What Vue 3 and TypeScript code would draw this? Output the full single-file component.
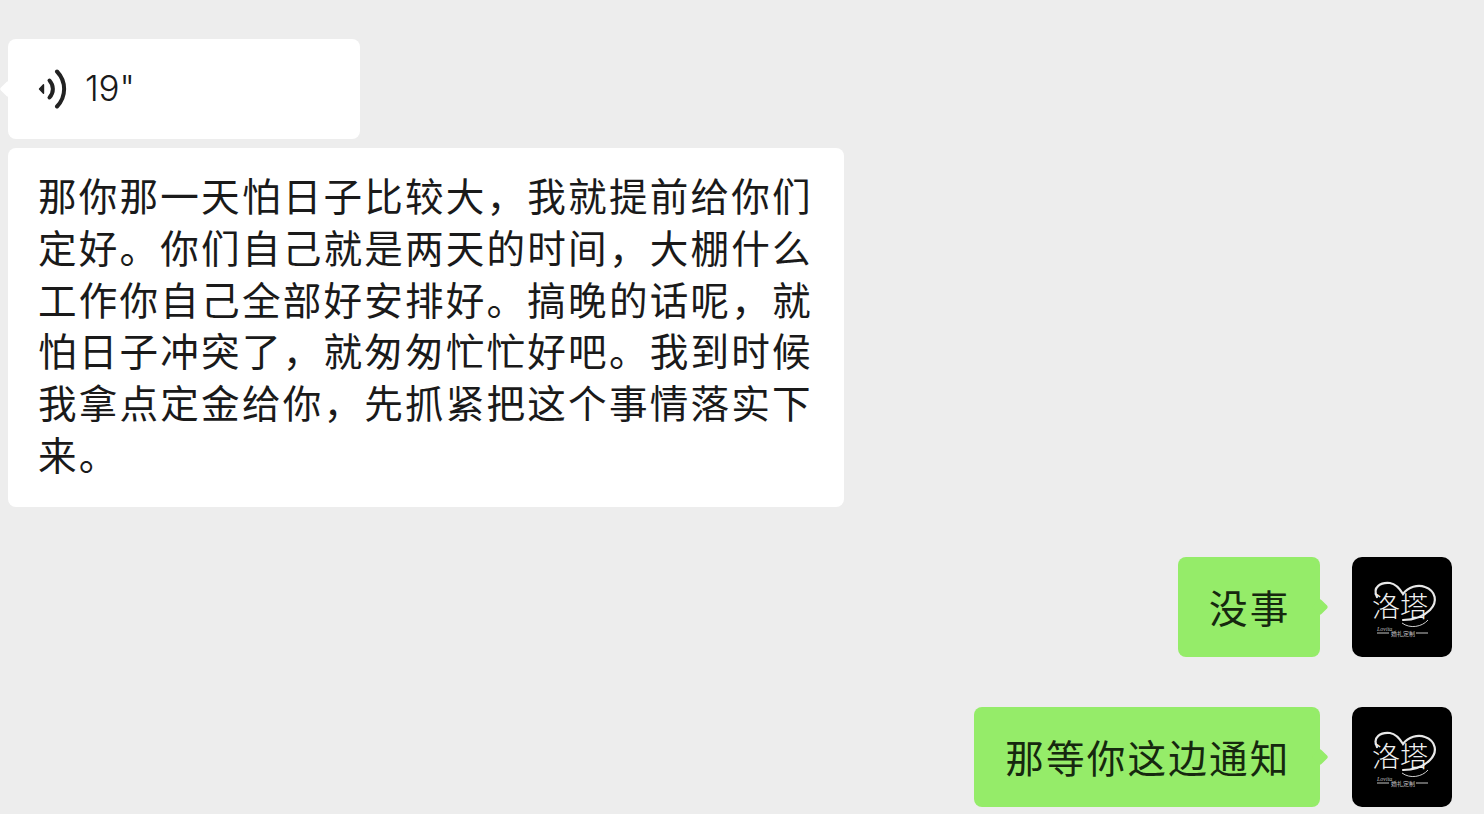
<script setup lang="ts">
/**
 * ChatView — WeChat-style conversation: voice note, transcript, two outgoing replies.
 */
interface Reply {
  id: number
  text: string
}

const transcript =
  "那你那一天怕日子比较大，我就提前给你们定好。你们自己就是两天的时间，大棚什么工作你自己全部好安排好。搞晚的话呢，就怕日子冲突了，就匆匆忙忙好吧。我到时候我拿点定金给你，先抓紧把这个事情落实下来。";

const replies: Reply[] = [
  { id: 1, text: "没事" },
  { id: 2, text: "那等你这边通知" },
];
</script>

<template>
  <div class="chat">
    <div class="incoming">
      <div class="bubble voice">
        <svg class="voice-icon" width="30" height="40" viewBox="0 0 30 40" fill="none">
          <path d="M1.5 20 L5.5 15.8 L5.5 24.2 Z" fill="#222" stroke="#222" stroke-width="1.4" stroke-linejoin="round" />
          <path d="M11.5 11.5 C16 16.5 16 23.5 11.5 28.5" stroke="#222" stroke-width="4" stroke-linecap="round" />
          <path d="M19 2.5 C28.5 12.5 28.5 27.5 19 37.5" stroke="#222" stroke-width="4" stroke-linecap="round" />
        </svg>
        <span class="duration">19"</span>
      </div>
      <div class="bubble transcript">{{ transcript }}</div>
    </div>

    <div class="outgoing">
      <div v-for="reply in replies" :key="reply.id" class="row">
        <div class="bubble green">{{ reply.text }}</div>
        <div class="avatar">
          <svg width="100" height="100" viewBox="0 0 100 100" fill="none">
            <path
              d="M25 40 C20 30 29 25 38 26 C44 27 48 32 51 37 C56 30 66 27 73 30 C84 34 86 45 78 53 C72 59 62 63 51 63"
              stroke="#e8e8e8"
              stroke-width="2.2"
              stroke-linecap="round"
            />
            <path d="M50 66 C58 72 70 70 76 63" stroke="#cfcfcf" stroke-width="1" />
            <text x="20" y="60" class="logo-mark">洛塔</text>
            <text x="25" y="74" class="logo-script">Lovita</text>
            <path d="M25 76 H37 M64 76 H76" stroke="#c4c4c4" stroke-width="1" />
            <text x="51" y="79" class="logo-sub" text-anchor="middle">婚礼定制</text>
          </svg>
        </div>
      </div>
    </div>
  </div>
</template>

<style scoped>
.chat {
  width: 1484px;
  height: 814px;
  box-sizing: border-box;
  padding: 39px 32px 0 8px;
  overflow: hidden;
  display: flex;
  flex-direction: column;
  font-family: "Liberation Sans", "Noto Sans CJK SC", sans-serif;
  color: #1a1a1a;
}

.incoming {
  display: flex;
  flex-direction: column;
  gap: 9px;
  align-items: flex-start;
}

.bubble {
  position: relative;
  box-sizing: border-box;
  border-radius: 8px;
  background: #fff;
}

.voice {
  width: 352px;
  height: 100px;
  padding: 0 0 2px 30px;
  display: flex;
  align-items: center;
  gap: 17px;
}

.voice-icon {
  margin-top: 2px;
  flex-shrink: 0;
}

.voice::before {
  content: "";
  position: absolute;
  left: -6px;
  top: 44px;
  width: 12px;
  height: 12px;
  background: #fff;
  transform: rotate(45deg);
  border-radius: 2px;
}

.duration {
  font-family: "Inter", "Liberation Sans", sans-serif;
  font-size: 35px;
  font-weight: 300;
  letter-spacing: -0.2px;
}

.transcript {
  width: 836px;
  height: 359px;
  padding: 21px 30px;
  font-family: "Noto Sans CJK SC", sans-serif;
  font-size: 38.6px;
  letter-spacing: 2.2px;
  line-height: 51.8px;
}

.outgoing {
  margin-top: 50px;
  display: flex;
  flex-direction: column;
  gap: 50px;
  align-items: flex-end;
}

.row {
  display: flex;
  gap: 32px;
}

.green {
  height: 100px;
  padding: 0 29.4px 3px 31px;
  background: #95ec69;
  display: flex;
  align-items: center;
  font-family: "Noto Sans CJK SC", sans-serif;
  font-size: 38.6px;
  letter-spacing: 2.2px;
  color: #16280f;
}

.green::after {
  content: "";
  position: absolute;
  right: -6px;
  top: 44px;
  width: 12px;
  height: 12px;
  background: #95ec69;
  transform: rotate(45deg);
  border-radius: 2px;
}

.avatar {
  width: 100px;
  height: 100px;
  flex-shrink: 0;
  border-radius: 10px;
  background: #000;
  overflow: hidden;
}

.avatar svg {
  display: block;
}

.logo-mark {
  font-family: "Noto Sans CJK SC", sans-serif;
  font-size: 28px;
  font-weight: 300;
  fill: #f0f0f0;
}

.logo-script {
  font-family: "Liberation Serif", serif;
  font-style: italic;
  font-size: 6px;
  fill: #bdbdbd;
}

.logo-sub {
  font-family: "Noto Sans CJK SC", sans-serif;
  font-size: 6px;
  fill: #c4c4c4;
}
</style>

<style>
body {
  background: #ededed;
}
</style>
